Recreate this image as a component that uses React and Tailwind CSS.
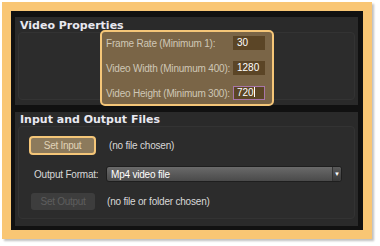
export default function App() {
  const font = "[font-family:'Liberation_Sans',Arial,sans-serif]";
  const label = "text-[10px] text-[#cfc7b6] tracking-[-0.2px] " + font;
  const plain = "text-[10px] text-[#d8d8d8] tracking-[-0.2px] " + font;
  const title = "ml-[2px] text-[11px] font-bold text-[#e8e8f0] [font-family:'DejaVu_Sans',sans-serif] leading-[11px]";
  const field = "w-[32px] h-[14px] bg-[#5b4526] text-[10px] text-white " + font;
  return (
    <div className="w-[380px] h-[246px] bg-white pl-[2px] pt-[2px]">
      <div className="w-[370px] h-[237px] bg-[#f9c674] p-[9px] shadow-[2px_2px_2px_rgba(0,0,0,0.25)]">
        <div className="h-full bg-[#111] pl-[4px] pr-[5px] pt-[6px] pb-[4px] flex flex-col gap-[7px]">
          {/* Video Properties */}
          <section className="bg-[#2a2a2a] h-[88px] pt-[3px] px-[3px]">
            <h2 className={title}>Video Properties</h2>
            <div className="mt-[1px] h-[68px] rounded-[4px] border border-[#333] bg-[#2c2c2c] pl-[81px]">
              <div className="w-[174px] h-[76px] -mt-[3px] rounded-[5px] border-2 border-[#f5c678] bg-[#7a6547] pl-[4px] pr-[7px] pt-[4px] flex flex-col gap-[11px]">
                <div className="flex items-center justify-between h-[14px]">
                  <span className={label}>Frame Rate (Minimum 1):</span>
                  <span className={field + " pl-[4px] leading-[14px]"}>30</span>
                </div>
                <div className="flex items-center justify-between h-[14px]">
                  <span className={label}>Video Width (Minumum 400):</span>
                  <span className={field + " pl-[4px] leading-[14px]"}>1280</span>
                </div>
                <div className="flex items-center justify-between h-[14px]">
                  <span className={label}>Video Height (Minimum 300):</span>
                  <span className={field + " border border-[#a876a8] pl-[3px] leading-[12px]"}>
                    720<span className="inline-block w-px h-[10px] bg-white align-[-1px]" />
                  </span>
                </div>
              </div>
            </div>
          </section>

          {/* Input and Output Files */}
          <section className="bg-[#2a2a2a] flex-1 pt-[2px] px-[3px] pb-[7px] flex flex-col">
            <h2 className={title}>Input and Output Files</h2>
            <div className="mt-[1px] flex-1 rounded-[4px] border border-[#333] bg-[#2c2c2c] pl-[10px] pr-[12px] pt-[9px] flex flex-col">
              <div className="flex items-center h-[19px]">
                <button className={"w-[67px] h-[19px] rounded-[4px] border-2 border-[#f5c678] bg-[#8c7a5c] text-[10px] text-[#e0d4b8] tracking-[-0.3px] " + font}>Set Input</button>
                <span className={"ml-[13px] " + plain}>(no file chosen)</span>
              </div>
              <div className="flex items-center h-[16px] mt-[11px]">
                <span className={"w-[77px] pl-[5px] " + plain}>Output Format:</span>
                <div className="flex-1 h-[16px] rounded-[3px] border border-[#1e1e1e] bg-gradient-to-b from-[#6a6a6a] to-[#4a4a4a] flex items-center">
                  <span className={"flex-1 pl-[4px] text-[10px] text-white tracking-[-0.2px] " + font}>Mp4 video file</span>
                  <span className="w-[9px] h-full border-l border-[#333] bg-gradient-to-b from-[#5a5a5a] to-[#3a3a3a] rounded-r-[3px] flex items-center justify-center text-[6px] text-white">▼</span>
                </div>
              </div>
              <div className="flex items-center h-[17px] mt-[11px]">
                <button className={"ml-[2px] w-[64px] h-[17px] rounded-[3px] bg-[#3d3d3d] text-[10px] text-[#5e5e5e] tracking-[-0.3px] " + font}>Set Output</button>
                <span className={"ml-[12px] " + plain}>(no file or folder chosen)</span>
              </div>
            </div>
          </section>
        </div>
      </div>
    </div>
  );
}
